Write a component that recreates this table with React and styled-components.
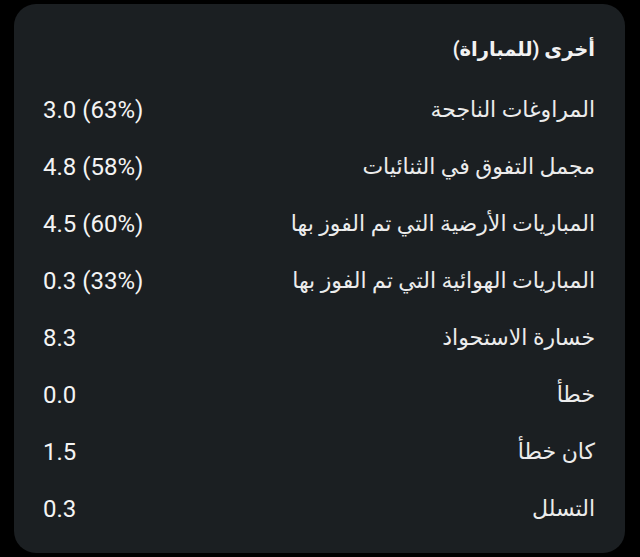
import styled, { createGlobalStyle } from 'styled-components';

const Global = createGlobalStyle`
  html, body {
    margin: 0;
    background: #000;
  }
  body {
    font-family: Roboto, "DejaVu Sans", sans-serif;
  }
`;

const Page = styled.div`
  width: 640px;
  height: 557px;
  padding: 4px 15px 4px 14px;
  box-sizing: border-box;
`;

const Card = styled.section`
  direction: rtl;
  background: #1b1f22;
  border-radius: 22px;
  height: 549px;
  box-sizing: border-box;
  padding: 31px 30px 13px 29px;
`;

const Title = styled.h2`
  margin: 0 0 16px;
  font-size: 19.5px;
  font-weight: bold;
  line-height: 30px;
  color: #f2f2f2;
`;

const Row = styled.div`
  display: flex;
  align-items: center;
  justify-content: space-between;
  height: 57px;
`;

const Label = styled.span`
  font-size: 22px;
  color: #ececec;
`;

const Value = styled.span`
  direction: ltr;
  width: 120px;
  text-align: left;
  font-size: 24px;
  color: #f4f4f4;
`;

const stats = [
  ['المراوغات الناجحة', '3.0 (63%)'],
  ['مجمل التفوق في الثنائيات', '4.8 (58%)'],
  ['المباريات الأرضية التي تم الفوز بها', '4.5 (60%)'],
  ['المباريات الهوائية التي تم الفوز بها', '0.3 (33%)'],
  ['خسارة الاستحواذ', '8.3'],
  ['خطأ', '0.0'],
  ['كان خطأ', '1.5'],
  ['التسلل', '0.3'],
];

export default function App() {
  return (
    <>
      <Global />
      <Page>
        <Card>
          <Title>أخرى (للمباراة)</Title>
          {stats.map(([label, value]) => (
            <Row key={label}>
              <Label>{label}</Label>
              <Value>{value}</Value>
            </Row>
          ))}
        </Card>
      </Page>
    </>
  );
}
